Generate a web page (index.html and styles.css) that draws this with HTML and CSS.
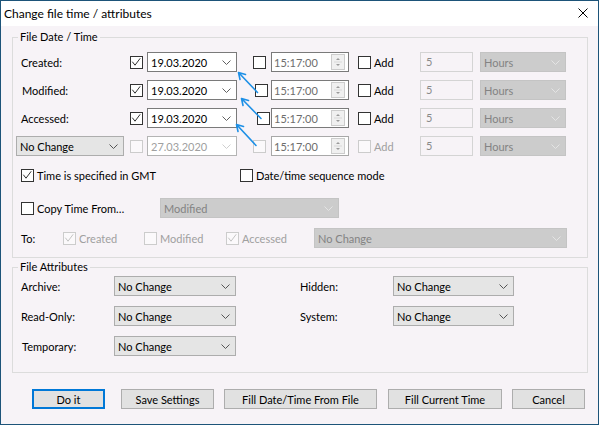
FILE: index.html
```html
<!DOCTYPE html>
<html>
<head>
<meta charset="utf-8">
<title>Change file time / attributes</title>
<link rel="stylesheet" href="styles.css">
</head>
<body>
<div class="window">
  <div class="titlebar">
    <span class="title">Change file time / attributes</span>
    <svg class="close" width="10" height="10" viewBox="0 0 10 10"><path d="M0.5 0.5 L9.5 9.5 M9.5 0.5 L0.5 9.5"/></svg>
  </div>
  <div class="content">
    <fieldset class="group g1">
      <legend>File Date / Time</legend>
      <div class="dtgrid">
        <span class="lbl">Created:</span>
        <span class="cell"><span class="cb"><svg viewBox="0 0 11 11"><polyline points="1.3,4.7 4,8.2 9.2,1.3"/></svg></span></span>
        <div class="combo white"><span>19.03.2020</span><svg class="chev" viewBox="0 0 9 5"><polyline points="0.5,0.5 4.5,4.5 8.5,0.5"/></svg></div>
        <span class="cell pad2"><span class="cb"></span></span>
        <div class="time"><span>15:17:00</span><svg class="spin" viewBox="0 0 14 16"><rect x="0.5" y="0.5" width="13" height="15"/><path class="sep" d="M3 8 H11"/><path class="tri" d="M5 6 L7 4 L9 6 Z M5 10 L7 12 L9 10 Z"/></svg></div>
        <span class="cell pad3"><span class="chk"><span class="cb"></span>Add</span></span>
        <div class="num">5</div>
        <div class="combo grey hours"><span>Hours</span><svg class="chev" viewBox="0 0 9 5"><polyline points="0.5,0.5 4.5,4.5 8.5,0.5"/></svg></div>

        <span class="lbl l2">Modified:</span>
        <span class="cell"><span class="cb"><svg viewBox="0 0 11 11"><polyline points="1.3,4.7 4,8.2 9.2,1.3"/></svg></span></span>
        <div class="combo white"><span>19.03.2020</span><svg class="chev" viewBox="0 0 9 5"><polyline points="0.5,0.5 4.5,4.5 8.5,0.5"/></svg></div>
        <span class="cell pad2 m2"><span class="cb"></span></span>
        <div class="time"><span>15:17:00</span><svg class="spin" viewBox="0 0 14 16"><rect x="0.5" y="0.5" width="13" height="15"/><path class="sep" d="M3 8 H11"/><path class="tri" d="M5 6 L7 4 L9 6 Z M5 10 L7 12 L9 10 Z"/></svg></div>
        <span class="cell pad3"><span class="chk"><span class="cb"></span>Add</span></span>
        <div class="num">5</div>
        <div class="combo grey hours"><span>Hours</span><svg class="chev" viewBox="0 0 9 5"><polyline points="0.5,0.5 4.5,4.5 8.5,0.5"/></svg></div>

        <span class="lbl">Accessed:</span>
        <span class="cell"><span class="cb"><svg viewBox="0 0 11 11"><polyline points="1.3,4.7 4,8.2 9.2,1.3"/></svg></span></span>
        <div class="combo white"><span>19.03.2020</span><svg class="chev" viewBox="0 0 9 5"><polyline points="0.5,0.5 4.5,4.5 8.5,0.5"/></svg></div>
        <span class="cell pad2 m3"><span class="cb"></span></span>
        <div class="time"><span>15:17:00</span><svg class="spin" viewBox="0 0 14 16"><rect x="0.5" y="0.5" width="13" height="15"/><path class="sep" d="M3 8 H11"/><path class="tri" d="M5 6 L7 4 L9 6 Z M5 10 L7 12 L9 10 Z"/></svg></div>
        <span class="cell pad3"><span class="chk"><span class="cb"></span>Add</span></span>
        <div class="num">5</div>
        <div class="combo grey hours"><span>Hours</span><svg class="chev" viewBox="0 0 9 5"><polyline points="0.5,0.5 4.5,4.5 8.5,0.5"/></svg></div>

        <div class="combo light nochange"><span>No Change</span><svg class="chev dark" viewBox="0 0 9 5"><polyline points="0.5,0.5 4.5,4.5 8.5,0.5"/></svg></div>
        <span class="cell"><span class="cb dis"></span></span>
        <div class="combo white disabled"><span>27.03.2020</span><svg class="chev faint" viewBox="0 0 9 5"><polyline points="0.5,0.5 4.5,4.5 8.5,0.5"/></svg></div>
        <span class="cell pad2"><span class="cb dis"></span></span>
        <div class="time t4"><span>15:17:00</span><svg class="spin" viewBox="0 0 14 16"><rect x="0.5" y="0.5" width="13" height="15"/><path class="sep" d="M3 8 H11"/><path class="tri" d="M5 6 L7 4 L9 6 Z M5 10 L7 12 L9 10 Z"/></svg></div>
        <span class="cell pad3"><span class="chk off"><span class="cb dis"></span>Add</span></span>
        <div class="num">5</div>
        <div class="combo grey hours"><span>Hours</span><svg class="chev" viewBox="0 0 9 5"><polyline points="0.5,0.5 4.5,4.5 8.5,0.5"/></svg></div>
      </div>

      <div class="row gmt">
        <span class="chk w219"><span class="cb"><svg viewBox="0 0 11 11"><polyline points="1.3,4.7 4,8.2 9.2,1.3"/></svg></span>Time is specified in GMT</span>
        <span class="chk"><span class="cb"></span>Date/time sequence mode</span>
      </div>

      <div class="row copy">
        <span class="chk w139"><span class="cb"></span>Copy Time From…</span>
        <div class="combo grey copyfrom"><span>Modified</span><svg class="chev" viewBox="0 0 9 5"><polyline points="0.5,0.5 4.5,4.5 8.5,0.5"/></svg></div>
      </div>

      <div class="row to">
        <span class="lbl w43">To:</span>
        <span class="chk off w81"><span class="cb dis"><svg viewBox="0 0 11 11"><polyline points="1.3,4.7 4,8.2 9.2,1.3"/></svg></span>Created</span>
        <span class="chk off w82"><span class="cb dis"></span>Modified</span>
        <span class="chk off w88"><span class="cb dis"><svg viewBox="0 0 11 11"><polyline points="1.3,4.7 4,8.2 9.2,1.3"/></svg></span>Accessed</span>
        <div class="combo grey tocombo"><span>No Change</span><svg class="chev" viewBox="0 0 9 5"><polyline points="0.5,0.5 4.5,4.5 8.5,0.5"/></svg></div>
      </div>
    </fieldset>

    <fieldset class="group g2">
      <legend>File Attributes</legend>
      <div class="attrgrid">
        <span class="lbl">Archive:</span>
        <div class="combo light"><span>No Change</span><svg class="chev dark" viewBox="0 0 9 5"><polyline points="0.5,0.5 4.5,4.5 8.5,0.5"/></svg></div>
        <span class="lbl right">Hidden:</span>
        <div class="combo light"><span>No Change</span><svg class="chev dark" viewBox="0 0 9 5"><polyline points="0.5,0.5 4.5,4.5 8.5,0.5"/></svg></div>

        <span class="lbl">Read-Only:</span>
        <div class="combo light"><span>No Change</span><svg class="chev dark" viewBox="0 0 9 5"><polyline points="0.5,0.5 4.5,4.5 8.5,0.5"/></svg></div>
        <span class="lbl right">System:</span>
        <div class="combo light"><span>No Change</span><svg class="chev dark" viewBox="0 0 9 5"><polyline points="0.5,0.5 4.5,4.5 8.5,0.5"/></svg></div>

        <span class="lbl l2">Temporary:</span>
        <div class="combo light"><span>No Change</span><svg class="chev dark" viewBox="0 0 9 5"><polyline points="0.5,0.5 4.5,4.5 8.5,0.5"/></svg></div>
      </div>
    </fieldset>

    <div class="buttons">
      <button class="btn default b1">Do it</button>
      <button class="btn b2">Save Settings</button>
      <button class="btn b3">Fill Date/Time From File</button>
      <button class="btn b4">Fill Current Time</button>
      <button class="btn b5">Cancel</button>
    </div>
  </div>

  <svg class="arrows" width="599" height="425" viewBox="0 0 599 425">
    <g>
      <path d="M257.5 92.5 L238.5 72.5 M238.5 72.5 L240 79.5 M238.5 72.5 L245.5 74.5"/>
      <path d="M261 118.5 L241.5 98.5 M241.5 98.5 L243 105.5 M241.5 98.5 L248.5 100.5"/>
      <path d="M256 145.5 L236.5 124.5 M236.5 124.5 L238 131.5 M236.5 124.5 L243.5 126.5"/>
    </g>
  </svg>
</div>
</body>
</html>
```
FILE: styles.css
```css
html, body {
  margin: 0;
  padding: 0;
}
body {
  font-family: "Lato", "Liberation Sans", sans-serif;
  font-size: 11px;
  color: #000;
  background: #f7f3f7;
}
.window {
  position: relative;
  width: 599px;
  height: 425px;
  box-sizing: border-box;
  border: 1px solid #1d5479;
  background: #f7f3f7;
  display: flex;
  flex-direction: column;
}
.titlebar {
  height: 25px;
  background: #fff;
  display: flex;
  align-items: center;
  justify-content: space-between;
  padding: 0 10px 0 3px;
  flex: none;
}
.title {
  font-size: 12px;
  line-height: 25px;
  padding-bottom: 1px;
}
.close {
  stroke: #000;
  stroke-width: 1;
  fill: none;
  margin-top: -1px;
}
.content {
  padding: 0 0 0 11px;
}
.group {
  margin: 4px 0 0 0;
  width: 576px;
  box-sizing: border-box;
  border: 1px solid #dcdcdc;
  padding: 8px 0 9px 8px;
  min-width: 0;
}
.group legend {
  padding: 0 2px;
  margin-left: -3px;
  line-height: 14px;
  font-size: 11px;
}
.g2 {
  margin-top: 2px;
  padding: 2px 0 16px 8px;
}
.lbl {
  align-self: center;
  white-space: nowrap;
}
.l2 { padding-left: 1px; }
.cell {
  display: flex;
  align-items: center;
}
.pad2 { padding-left: 16px; }
.m2 { padding-left: 18px; }
.m3 { padding-left: 20px; }
.pad3 { padding-left: 9px; }

.dtgrid {
  display: grid;
  grid-template-columns: 109px 17px 90px 34px 78px 71px 53px 93px;
  grid-template-rows: repeat(4, 20px);
  row-gap: 8px;
}
.cb {
  width: 13px;
  height: 13px;
  box-sizing: border-box;
  border: 1px solid #333;
  background: #fff;
  display: inline-flex;
  flex: none;
}
.cb svg {
  width: 11px;
  height: 11px;
  fill: none;
  stroke: #333;
  stroke-width: 1;
}
.cb.dis {
  border-color: #cccccc;
  background: #fbf9fb;
}
.cb.dis svg { stroke: #c4c4c4; }
.chk {
  display: inline-flex;
  align-items: center;
  gap: 3px;
  white-space: nowrap;
}
.chk.off { color: #a0a0a0; }

.combo {
  box-sizing: border-box;
  height: 20px;
  border: 1px solid #adadad;
  display: flex;
  align-items: center;
  justify-content: space-between;
  padding: 0 5px 0 3px;
  white-space: nowrap;
}
.combo .chev {
  width: 9px;
  height: 5px;
  fill: none;
  stroke: #7a7a7a;
  stroke-width: 1;
  flex: none;
}
.combo.white {
  background: #fff;
  border-color: #7a7a7a;
}
.combo.white .chev { stroke: #606060; }
.combo.white.disabled {
  border-color: #b4b4b4;
  color: #a0a0a0;
}
.combo .chev.faint { stroke: #cfcfcf; }
.combo.grey {
  background: #cccccc;
  border-color: #c4c4c4;
  color: #838383;
}
.combo.grey .chev { stroke: #e4e4e4; }
.combo.light {
  background: #e5e5e5;
  border-color: #adadad;
}
.combo .chev.dark { stroke: #555; }
.nochange {
  margin-left: -5px;
  width: 108px;
}
.time {
  box-sizing: border-box;
  height: 20px;
  border: 1px solid #7a7a7a;
  background: #fff;
  display: flex;
  align-items: center;
  justify-content: space-between;
  padding: 0 3px 0 2px;
  color: #6d6d6d;
}
.time.t4 { border-color: #a8a8a8; }
.spin {
  width: 14px;
  height: 16px;
  flex: none;
}
.spin rect { fill: #f0f0f0; stroke: #cccccc; stroke-width: 1; }
.spin .sep { stroke: #d8d8d8; stroke-width: 1; }
.spin .tri { fill: #9a9a9a; }
.num {
  box-sizing: border-box;
  height: 20px;
  border: 1px solid #d4d4d4;
  padding: 0 5px;
  line-height: 18px;
  color: #8a8a8a;
}
.hours {
  margin-left: 7px;
  width: 86px;
}

.row {
  display: flex;
  align-items: center;
}
.gmt { margin-top: 10px; height: 18px; }
.copy { margin-top: 14px; height: 20px; }
.to { margin-top: 10px; height: 20px; }
.w219 { width: 219px; }
.w139 { width: 139px; }
.w43 { width: 43px; margin-left: -1px; padding-left: 1px; box-sizing: border-box; }
.w81 { width: 81px; }
.w82 { width: 82px; }
.w88 { width: 88px; }
.copyfrom { width: 179px; }
.tocombo { width: 253px; }

.attrgrid {
  display: grid;
  grid-template-columns: 93px 122px 157px 121px;
  grid-template-rows: repeat(3, 20px);
  row-gap: 10px;
}
.attrgrid .right { padding-left: 64px; }

.buttons {
  display: flex;
  margin-top: 16px;
  padding-left: 20px;
}
.btn {
  font-family: "Lato", "Liberation Sans", sans-serif;
  font-size: 11px;
  height: 20px;
  box-sizing: border-box;
  background: #e1e1e1;
  border: 1px solid #adadad;
  padding: 0;
  margin: 0;
  color: #000;
  flex: none;
}
.btn.default {
  border: 2px solid #0078d7;
}
.b1 { width: 73px; }
.b2 { width: 93px; margin-left: 16px; }
.b3 { width: 153px; margin-left: 10px; }
.b4 { width: 114px; margin-left: 11px; }
.b5 { width: 73px; margin-left: 10px; }

.arrows {
  position: absolute;
  left: -1px;
  top: -1px;
  pointer-events: none;
}
.arrows path {
  fill: none;
  stroke: #1e90e6;
  stroke-width: 1.6;
  stroke-linecap: round;
}
```
